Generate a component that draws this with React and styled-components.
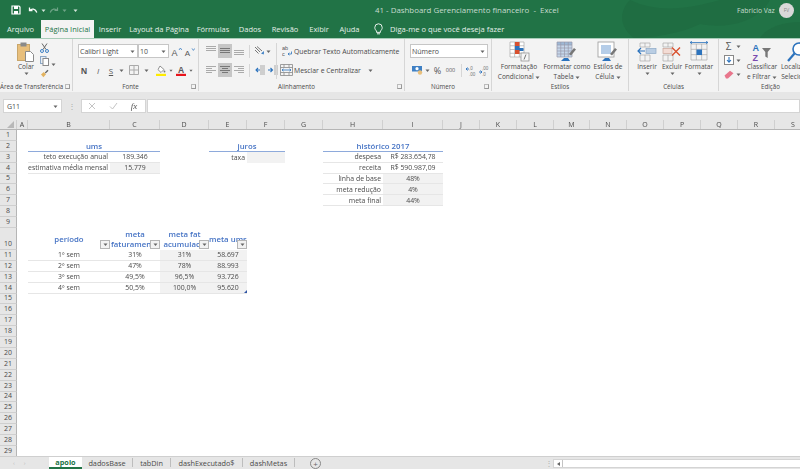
import React from "react";
import styled, { createGlobalStyle } from "styled-components";

const GlobalStyle = createGlobalStyle`
  html, body {
    margin: 0;
    padding: 0;
    background: #fff;
    overflow: hidden;
  }
  * { box-sizing: border-box; }
`;

const font = `"Open Sans", "Noto Sans", sans-serif`;
const ink = "#4a4a4a";

const Page = styled.div`
  width: 800px;
  height: 469px;
  overflow: hidden;
  display: flex;
  flex-direction: column;
  font-family: ${font};
  font-size: 7px;
  color: ${ink};
  filter: blur(0.35px);
`;

/* ---------- title + tabs ---------- */

const Header = styled.header`
  position: relative;
  height: 38px;
  flex: none;
  background: #217346;
  color: #fff;
`;

const Swirl = styled.svg`
  position: absolute;
  left: 610px;
  top: 0;
`;

const TitleBar = styled.div`
  position: relative;
  height: 20px;
  display: flex;
  align-items: center;
  padding-left: 11px;
`;

const Quick = styled.div`
  width: 364px;
  display: flex;
  align-items: center;
  gap: 3px;
`;

const Spacer = styled.span`
  width: ${(p) => p.$w}px;
  flex: none;
`;

const DocTitle = styled.div`
  width: 362px;
  color: #c7dccf;
  font-size: 7.9px;
  white-space: pre;
`;

const UserName = styled.div`
  width: 42px;
  color: #c7dccf;
  font-size: 6.8px;
  white-space: nowrap;
`;

const Avatar = styled.div`
  width: 15px;
  height: 15px;
  border-radius: 50%;
  background: #d9d9d9;
  color: #888;
  font-size: 5px;
  display: flex;
  align-items: center;
  justify-content: center;
`;

const TabRow = styled.nav`
  position: relative;
  height: 18px;
  display: flex;
  align-items: stretch;
`;

const Tab = styled.div`
  width: ${(p) => p.$w}px;
  display: flex;
  align-items: center;
  justify-content: center;
  white-space: nowrap;
  font-size: 7.5px;
  color: ${(p) => (p.$active ? "#217346" : "#e4efe9")};
  background: ${(p) => (p.$active ? "#f3f3f3" : "transparent")};
`;

const TellMe = styled.div`
  display: flex;
  align-items: center;
  gap: 7px;
  margin-left: 9px;
  font-size: 7.6px;
  color: #e4efe9;
  white-space: nowrap;
`;

/* ---------- ribbon ---------- */

const Ribbon = styled.section`
  height: 54px;
  flex: none;
  display: flex;
  overflow: hidden;
  background: #f3f3f3;
  border-top: 1px solid #a8cdb9;
`;

const Group = styled.div`
  position: relative;
  width: ${(p) => p.$w}px;
  flex: none;
  display: flex;
  flex-direction: column;
  border-right: 1px solid #d6d6d6;
  margin-bottom: 1px;
`;

const GroupBody = styled.div`
  flex: 1;
  min-height: 0;
  display: flex;
  padding-left: ${(p) => p.$pl || 0}px;
  padding-top: ${(p) => p.$pt || 0}px;
`;

const GroupLabel = styled.div`
  height: 9px;
  flex: none;
  text-align: center;
  font-size: 6.2px;
  line-height: 9px;
  white-space: nowrap;
  padding-right: ${(p) => p.$pr || 0}px;
`;

const Launcher = styled.span`
  position: absolute;
  right: 2px;
  bottom: 2px;
  width: 5px;
  height: 5px;
  border: 1px solid #999;
  border-top-color: #bbb;
  border-left-color: #bbb;
`;

const Stack = styled.div`
  display: flex;
  flex-direction: column;
  gap: 5px;
  padding-top: 5px;
  width: ${(p) => (p.$w ? `${p.$w}px` : "auto")};
`;

const ToolRow = styled.div`
  height: 14px;
  flex: none;
  display: flex;
  align-items: center;
  padding-left: ${(p) => p.$pl || 0}px;
`;

const Slot = styled.div`
  width: ${(p) => p.$w}px;
  height: 14px;
  flex: none;
  display: flex;
  align-items: center;
  justify-content: center;
  font-size: ${(p) => p.$fs || 7}px;
  font-weight: ${(p) => p.$fw || 400};
  font-style: ${(p) => (p.$italic ? "italic" : "normal")};
  font-family: ${(p) => (p.$serif ? `"Liberation Serif", serif` : "inherit")};
  background: ${(p) => (p.$on ? "#c6c6c6" : "transparent")};
  color: #555;
`;

const Combo = styled.div`
  position: relative;
  width: ${(p) => p.$w}px;
  height: 14px;
  flex: none;
  background: #fff;
  border: 1px solid #c6c6c6;
  display: flex;
  align-items: center;
  justify-content: space-between;
  padding: 0 2px 0 1px;
  font-size: 7px;
  white-space: nowrap;
`;

const Divider = styled.span`
  width: 1px;
  height: 13px;
  flex: none;
  background: #d6d6d6;
  margin: 0 ${(p) => p.$m || 0}px;
`;

const TallDivider = styled.span`
  width: 1px;
  height: 36px;
  flex: none;
  margin: 4px 3px 0 0;
  background: #d6d6d6;
`;

const WideTool = styled.div`
  display: flex;
  align-items: center;
  gap: 1px;
  white-space: nowrap;
  font-size: 6.85px;
`;

const BigButton = styled.div`
  width: ${(p) => p.$w}px;
  flex: none;
  display: flex;
  flex-direction: column;
  align-items: center;
  white-space: nowrap;
  font-size: 6.55px;
  line-height: 10px;
  padding-top: ${(p) => p.$top || 0}px;
`;

const BigIcon = styled.div`
  height: 21px;
  display: flex;
  align-items: flex-end;
  justify-content: center;
`;

const SmallCol = styled.div`
  width: ${(p) => p.$w}px;
  flex: none;
  display: flex;
  flex-direction: column;
  align-items: center;
  gap: ${(p) => p.$gap || 0}px;
  padding-top: ${(p) => p.$top || 0}px;
`;

const CopyCaret = styled.div`
  padding-top: 18px;
`;

const Caret = ({ color = "#666" }) => (
  <svg width="5" height="3" viewBox="0 0 5 3">
    <path d="M0.5 0.5h4L2.5 3z" fill={color} />
  </svg>
);

const Line = ({ d, c = "#777", w = 1 }) => <path d={d} stroke={c} strokeWidth={w} fill="none" />;

const SaveIcon = () => (
  <svg width="10" height="10" viewBox="0 0 10 10">
    <path d="M1 1h7l1 1v7H1z" fill="none" stroke="#fff" strokeWidth="1.2" />
    <path d="M3 1h4v3H3zM3 6h4v3H3z" fill="#fff" />
  </svg>
);

const UndoIcon = ({ c = "#fff" }) => (
  <svg width="10" height="9" viewBox="0 0 10 9">
    <path d="M1.5 1.5v3h3" fill="none" stroke={c} strokeWidth="1.3" />
    <path d="M1.8 4.4C3.5 2.4 7.5 2.4 8.8 6.5" fill="none" stroke={c} strokeWidth="1.3" />
  </svg>
);

const RedoIcon = () => (
  <svg width="10" height="9" viewBox="0 0 10 9">
    <path d="M8.5 1.5v3h-3" fill="none" stroke="#6fa487" strokeWidth="1.2" />
    <path d="M8.2 4.4C6.5 2.4 2.5 2.4 1.2 6.5" fill="none" stroke="#6fa487" strokeWidth="1.2" />
  </svg>
);

const BulbIcon = () => (
  <svg width="9" height="12" viewBox="0 0 9 12">
    <path d="M2.6 8C1.5 7 .8 6 .8 4.5a3.7 3.7 0 0 1 7.4 0C8.2 6 7.5 7 6.4 8v1.4H2.6z" fill="none" stroke="#fff" strokeWidth="0.9" />
    <path d="M3 10.8h3" stroke="#fff" strokeWidth="0.9" />
  </svg>
);

const PasteIcon = () => (
  <svg width="18" height="20" viewBox="0 0 18 20">
    <rect x="0.5" y="2.5" width="12" height="16" fill="#e8bf7c" stroke="#c9a66a" />
    <rect x="3.5" y="0.5" width="6" height="4" fill="#8a8a8a" />
    <path d="M8.5 9.5h5l3 3v7h-8z" fill="#fff" stroke="#8a8a8a" />
  </svg>
);

const ScissorsIcon = () => (
  <svg width="9" height="10" viewBox="0 0 9 10">
    <Line d="M2 0.5l4 6M7 0.5l-4 6" c="#666" />
    <circle cx="2" cy="8" r="1.5" fill="none" stroke="#3f80c4" />
    <circle cx="7" cy="8" r="1.5" fill="none" stroke="#3f80c4" />
  </svg>
);

const CopyIcon = () => (
  <svg width="9" height="10" viewBox="0 0 9 10">
    <rect x="0.5" y="0.5" width="5.5" height="7" fill="#e8eef5" stroke="#8ca8c6" />
    <rect x="3" y="2.5" width="5.5" height="7" fill="#fff" stroke="#8a8a8a" />
  </svg>
);

const BrushIcon = () => (
  <svg width="9" height="9" viewBox="0 0 9 9">
    <path d="M4.8 3.4L7.5.7 8.5 1.7 5.7 4.4z" fill="#666" />
    <path d="M1 5.5L3.8 3l2.2 2.3-2.6 3z" fill="#e3b35f" />
  </svg>
);

const BorderIcon = () => (
  <svg width="10" height="10" viewBox="0 0 10 10">
    <path d="M.5.5h9v9h-9zM5 .5v9M.5 5h9" fill="none" stroke="#aaa" />
  </svg>
);

const BucketIcon = () => (
  <svg width="10" height="11" viewBox="0 0 10 11">
    <path d="M4 1l4 3.5-3 3L2 4.6z" fill="#fff" stroke="#777" strokeWidth="0.8" />
    <circle cx="8.5" cy="6.5" r="0.9" fill="#777" />
    <rect x="0" y="8.8" width="10" height="2.2" fill="#ffeb00" />
  </svg>
);

const FontColorIcon = () => (
  <svg width="10" height="11" viewBox="0 0 10 11">
    <text x="5" y="7.6" textAnchor="middle" fontSize="8.5" fontWeight="700" fontFamily="Liberation Sans" fill="#555">A</text>
    <rect x="0" y="8.8" width="10" height="2.2" fill="#e8141c" />
  </svg>
);

const GrowA = ({ small }) => (
  <svg width="12" height="11" viewBox="0 0 12 11">
    <text x="4.5" y="9.5" textAnchor="middle" fontSize={small ? 8 : 9} fontFamily="Liberation Sans" fill="#555">A</text>
    <path d={small ? "M9 2.4l1.4 2 1.4-2" : "M9 4l1.4-2 1.4 2"} fill="none" stroke="#3f80c4" strokeWidth="0.8" />
  </svg>
);

const LinesIcon = ({ rows, dark }) => (
  <svg width="10" height="10" viewBox="0 0 10 10">
    {rows.map(([x, y, w]) => (
      <rect key={`${x}${y}`} x={x} y={y} width={w} height="1" fill={dark ? "#777" : "#aaa"} />
    ))}
  </svg>
);

const vTop = [[0, 0, 10], [0, 2, 10], [0, 4, 10]];
const vMid = [[0, 2, 10], [0, 4, 10], [0, 6, 10]];
const vBot = [[0, 4, 10], [0, 6, 10], [0, 8, 10]];
const hLeft = [[0, 1, 10], [0, 3, 6], [0, 5, 10], [0, 7, 6]];
const hMid = [[0, 1, 10], [2, 3, 6], [0, 5, 10], [2, 7, 6]];
const hRight = [[0, 1, 10], [4, 3, 6], [0, 5, 10], [4, 7, 6]];

const OrientIcon = () => (
  <svg width="11" height="10" viewBox="0 0 11 10">
    <Line d="M1 1l5 5M3 .5l5 4.5M1 4l3.5 3.5" c="#777" />
    <path d="M7 7.5l3-2.5-.2 3.5z" fill="#3f80c4" />
  </svg>
);

const IndentIcon = ({ flip }) => (
  <svg width="10" height="10" viewBox="0 0 10 10">
    <path d={flip ? "M6 1h4M6 3h4M6 5h4M6 7h4M6 9h4" : "M5 1h5M5 3h5M5 5h5M5 7h5M5 9h5"} stroke="#aaa" strokeWidth="1" />
    <path d={flip ? "M0 5h4M2.5 3l2 2-2 2" : "M5 5H1M3 3L1 5l2 2"} stroke="#2c73bd" strokeWidth="1.1" fill="none" />
  </svg>
);

const WrapIcon = () => (
  <svg width="11" height="12" viewBox="0 0 11 12">
    <text x="0" y="5" fontSize="5.5" fontFamily="Liberation Sans" fill="#555">ab</text>
    <text x="0" y="11" fontSize="5.5" fontFamily="Liberation Sans" fill="#555">c</text>
    <path d="M6 9h3.5V6.5M6 9l1.4-1.2M6 9l1.4 1.2" stroke="#2c73bd" strokeWidth="0.8" fill="none" />
  </svg>
);

const MergeIcon = () => (
  <svg width="13" height="12" viewBox="0 0 13 12">
    <path d="M.5.5h12v11H.5zM.5 3.5h12M.5 8.5h12M4 .5v3M9 .5v3M4 8.5v3M9 8.5v3" fill="none" stroke="#888" strokeWidth="0.8" />
    <path d="M2 6h9M3.5 4.8L2 6l1.5 1.2M9.5 4.8L11 6 9.5 7.2" fill="none" stroke="#2c73bd" strokeWidth="0.8" />
  </svg>
);

const CurrencyIcon = () => (
  <svg width="11" height="10" viewBox="0 0 11 10">
    <rect x="0" y="1" width="10" height="5.5" fill="#3f80c4" />
    <circle cx="5" cy="3.7" r="1.6" fill="#fff" />
    <circle cx="8" cy="7.5" r="2.2" fill="#e8bf7c" />
  </svg>
);

const DecimalIcon = ({ more }) => (
  <svg width="12" height="11" viewBox="0 0 12 11">
    <text x="3" y="5" fontSize="4.5" fontFamily="Liberation Sans" fill="#777">{more ? ",0" : ",00"}</text>
    <text x="3" y="10.5" fontSize="4.5" fontFamily="Liberation Sans" fill="#777">{more ? ",00" : ",0"}</text>
    <path d={more ? "M0 4h3M1.6 2.5L0 4l1.6 1.5" : "M0 7h3M1.4 5.5L3 7 1.4 8.5"} stroke="#2c73bd" strokeWidth="0.9" fill="none" />
  </svg>
);

const Grid = ({ x, y, w, h, cols, rows, c = "#aaa" }) => {
  const lines = [];
  for (let i = 0; i <= cols; i++) lines.push(`M${x + (i * w) / cols} ${y}v${h}`);
  for (let i = 0; i <= rows; i++) lines.push(`M${x} ${y + (i * h) / rows}h${w}`);
  return <path d={lines.join("")} stroke={c} strokeWidth="0.7" fill="none" />;
};

const CondFormatIcon = () => (
  <svg width="21" height="21" viewBox="0 0 21 21">
    <rect x="1" y="1" width="14" height="15" fill="#fff" />
    <Grid x={1} y={1} w={14} h={15} cols={3} rows={4} />
    <rect x="6" y="1" width="4.5" height="4" fill="#d9502e" />
    <rect x="6" y="5" width="4.5" height="4" fill="#2c73bd" />
    <rect x="10" y="7" width="4.5" height="3" fill="#2c73bd" />
    <rect x="6" y="9" width="4.5" height="4" fill="#d9502e" />
    <rect x="12" y="12" width="8" height="8" fill="#f6f6f6" stroke="#888" strokeWidth="0.7" />
    <path d="M15 18.5l2-5" stroke="#555" strokeWidth="0.8" />
  </svg>
);

const BrushMark = () => (
  <>
    <path d="M13 13l5-6 2 1.5-5 6z" fill="#777" />
    <path d="M5 20l3-3 4 0 2 3z" fill="#2c73bd" />
  </>
);

const FormatTableIcon = () => (
  <svg width="22" height="21" viewBox="0 0 22 21">
    <rect x="1" y="1" width="15" height="15" fill="#c5d6ea" />
    <rect x="1" y="1" width="15" height="3" fill="#9db8d6" />
    <Grid x={1} y={1} w={15} h={15} cols={4} rows={5} c="#99a" />
    <BrushMark />
  </svg>
);

const CellStyleIcon = () => (
  <svg width="22" height="21" viewBox="0 0 22 21">
    <rect x="1" y="1" width="16" height="15" fill="#fff" stroke="#999" strokeWidth="0.8" />
    <rect x="4" y="4" width="10" height="9" fill="#b5cde8" />
    <BrushMark />
  </svg>
);

const InsertCellIcon = () => (
  <svg width="20" height="20" viewBox="0 0 20 20">
    <Grid x={3} y={1} w={10} h={4} cols={2} rows={1} />
    <Grid x={3} y={13} w={10} h={6} cols={2} rows={1} />
    <rect x="9" y="6.5" width="10" height="5" fill="#b9cde3" stroke="#8ca8c6" strokeWidth="0.7" />
    <path d="M8 9H1M4 6L1 9l3 3" stroke="#2c73bd" strokeWidth="1.2" fill="none" />
  </svg>
);

const DeleteCellIcon = () => (
  <svg width="20" height="20" viewBox="0 0 20 20">
    <Grid x={1} y={1} w={10} h={4} cols={2} rows={1} />
    <Grid x={1} y={13} w={10} h={6} cols={2} rows={1} />
    <rect x="1" y="6.5" width="9" height="5" fill="#f3dcd5" stroke="#c9a498" strokeWidth="0.7" />
    <path d="M10 5.5l8 8M18 5.5l-8 8" stroke="#d9502e" strokeWidth="1.4" />
  </svg>
);

const FormatCellIcon = () => (
  <svg width="20" height="21" viewBox="0 0 20 21">
    <Grid x={2} y={3} w={16} h={16} cols={3} rows={3} />
    <rect x="7.5" y="8.5" width="5.5" height="5.5" fill="#2c73bd" />
    <path d="M1 1.5h18M1 1.5l2-1.2M1 1.5l2 1.2M19 1.5l-2-1.2M19 1.5l-2 1.2" stroke="#2c73bd" strokeWidth="0.8" fill="none" />
  </svg>
);

const FillDownIcon = () => (
  <svg width="10" height="10" viewBox="0 0 10 10">
    <rect x=".5" y=".5" width="9" height="9" fill="#fff" stroke="#888" />
    <path d="M5 2v5M3 5l2 2.2L7 5" stroke="#2c73bd" strokeWidth="1.1" fill="none" />
  </svg>
);

const EraserIcon = () => (
  <svg width="10" height="9" viewBox="0 0 10 9">
    <path d="M.5 5.5L6 .8l3.5 2.5L4 8.5H2z" fill="#e8768c" />
  </svg>
);

const SortIcon = () => (
  <svg width="20" height="19" viewBox="0 0 20 19">
    <text x="0.5" y="8" fontSize="9" fontWeight="700" fontFamily="Liberation Sans" fill="#2c73bd">A</text>
    <text x="0.5" y="18" fontSize="9" fontWeight="700" fontFamily="Liberation Sans" fill="#7a4bb0">Z</text>
    <path d="M10 5h9l-3.3 4v6l-2.4-1.4V9z" fill="#777" />
  </svg>
);

const FindIcon = () => (
  <svg width="20" height="21" viewBox="0 0 20 21">
    <circle cx="12" cy="8" r="6" fill="#fff" stroke="#2c73bd" strokeWidth="1.6" />
    <path d="M7.5 12.5L1 20" stroke="#2c73bd" strokeWidth="2.2" />
  </svg>
);

/* ---------- formula bar ---------- */

const FormulaBar = styled.div`
  height: 28px;
  flex: none;
  display: flex;
  gap: 1px;
  padding: 7px 0 7px 3px;
  background: #e6e6e6;
`;

const NameBox = styled.div`
  width: 59px;
  display: flex;
  align-items: center;
  justify-content: space-between;
  padding: 0 3px;
  background: #fff;
  border: 1px solid #d4d4d4;
  font-size: 7px;
`;

const Grip = styled.div`
  width: 17px;
  text-align: center;
  color: #aaa;
  font-size: 8px;
  line-height: 14px;
`;

const FxBox = styled.div`
  width: 65px;
  display: flex;
  align-items: center;
  background: #fff;
  border: 1px solid #d4d4d4;
`;

const FormulaInput = styled.div`
  flex: 1;
  background: #fff;
  border: 1px solid #d4d4d4;
`;

/* ---------- sheet ---------- */

const COLS = [
  ["A", 11], ["B", 82], ["C", 50], ["D", 49], ["E", 38], ["F", 38], ["G", 38], ["H", 60], ["I", 60],
  ["J", 37], ["K", 37], ["L", 37], ["M", 36], ["N", 37], ["O", 37], ["P", 37], ["Q", 37], ["R", 37], ["S", 37],
];

const Sheet = styled.div`
  flex: 1;
  min-height: 0;
  overflow: hidden;
`;

const Row = styled.div`
  display: flex;
  height: ${(p) => p.$h}px;
`;

const HeadRow = styled(Row)`
  flex: none;
  background: #e6e6e6;
  border-bottom: 1px solid #b5b5b5;
`;

const Corner = styled.div`
  width: 17px;
  flex: none;
  display: flex;
  align-items: flex-end;
  justify-content: flex-end;
  padding: 0 2px 1px 0;
  border-right: 1px solid #cfcfcf;
  &::after {
    content: "";
    border-style: solid;
    border-width: 0 0 7px 7px;
    border-color: transparent transparent #b8b8b8 transparent;
  }
`;

const ColHead = styled.div`
  width: ${(p) => p.$w}px;
  flex: none;
  text-align: center;
  font-size: 7px;
  line-height: 9px;
  border-right: 1px solid #cfcfcf;
`;

const RowHead = styled.div`
  width: 17px;
  flex: none;
  display: flex;
  align-items: flex-end;
  justify-content: center;
  background: #e6e6e6;
  border-right: 1px solid #b5b5b5;
  border-bottom: 1px solid #cfcfcf;
  font-size: 7px;
  line-height: 10px;
`;

const borders = { blue: "1px solid #8eaadb", soft: "1px solid #e6e6e6" };

const Cell = styled.div`
  position: relative;
  width: ${(p) => p.$w}px;
  flex: none;
  display: flex;
  align-items: center;
  justify-content: ${(p) => (p.$align === "right" ? "flex-end" : "center")};
  padding-right: ${(p) => (p.$align === "right" ? 2 : 0)}px;
  overflow: hidden;
  white-space: nowrap;
  font-size: ${(p) => (p.$title ? 7.8 : 6.9)}px;
  color: ${(p) => (p.$title ? "#4472c4" : ink)};
  font-weight: ${(p) => (p.$title ? 600 : 400)};
  background: ${(p) => (p.$gray ? "#f2f2f2" : "#fff")};
  border-bottom: ${(p) => borders[p.$line] || "none"};
`;

const HeadText = styled.div`
  text-align: center;
  line-height: 10px;
`;

const Filter = styled.span`
  position: absolute;
  right: 0;
  bottom: 1px;
  width: 10px;
  height: 9px;
  display: flex;
  align-items: center;
  justify-content: center;
  background: #f2f2f2;
  border: 1px solid #b5b5b5;
`;

const ResizeMark = styled.span`
  position: absolute;
  right: 0;
  bottom: 0;
  border-style: solid;
  border-width: 0 0 3px 3px;
  border-color: transparent transparent #2f55a4 transparent;
`;

const title = (t, span) => ({ t, span, title: true, line: "blue" });
const label = (t) => ({ t, align: "right", line: "soft" });
const value = (t, gray) => ({ t, gray, line: "soft" });
const head = (lines) => ({ lines, title: true, filter: true });

const DATA = {
  2: { B: title("ums", 2), E: title("juros", 2), H: title("histórico 2017", 2) },
  3: {
    B: label("teto execução anual"),
    C: value("189.346"),
    E: { t: "taxa", align: "right" },
    F: { t: "", gray: true },
    H: label("despesa"),
    I: value("R$ 283.654,78"),
  },
  4: {
    B: label("estimativa média mensal"),
    C: value("15.779", true),
    H: label("receita"),
    I: value("R$ 590.987,09"),
  },
  5: { H: label("linha de base"), I: value("48%", true) },
  6: { H: label("meta redução"), I: value("4%", true) },
  7: { H: label("meta final"), I: value("44%", true) },
  10: {
    B: head(["período"]),
    C: head(["meta", "faturamento"]),
    D: head(["meta fat", "acumulado"]),
    E: head(["meta ums"]),
  },
};

[
  ["1º sem", "31%", "31%", "58.697"],
  ["2º sem", "47%", "78%", "88.993"],
  ["3º sem", "49,5%", "96,5%", "93.726"],
  ["4º sem", "50,5%", "100,0%", "95.620"],
].forEach(([b, c, d, e], i) => {
  DATA[11 + i] = { B: value(b), C: value(c), D: value(d, true), E: { ...value(e, true), mark: i === 3 } };
});

const rowNumbers = Array.from({ length: 29 }, (_, i) => i + 1);

const SheetRow = ({ n }) => {
  const cells = DATA[n] || {};
  const out = [];
  let skip = 0;
  COLS.forEach(([col, w]) => {
    if (skip > 0) {
      skip -= 1;
      return;
    }
    const c = cells[col];
    if (!c) {
      out.push(<Cell key={col} $w={w} />);
      return;
    }
    let width = w;
    if (c.span) {
      const idx = COLS.findIndex(([k]) => k === col);
      width = COLS.slice(idx, idx + c.span).reduce((sum, [, cw]) => sum + cw, 0);
      skip = c.span - 1;
    }
    out.push(
      <Cell key={col} $w={width} $align={c.align} $gray={c.gray} $line={c.line} $title={c.title}>
        {c.lines ? (
          <HeadText>
            {c.lines.map((l) => (
              <div key={l}>{l}</div>
            ))}
          </HeadText>
        ) : (
          c.t
        )}
        {c.filter && (
          <Filter>
            <Caret />
          </Filter>
        )}
        {c.mark && <ResizeMark />}
      </Cell>
    );
  });
  return (
    <Row $h={n === 10 ? 22 : 10.9}>
      <RowHead>{n}</RowHead>
      {out}
    </Row>
  );
};

/* ---------- bottom tabs ---------- */

const SheetBar = styled.footer`
  height: 13px;
  flex: none;
  display: flex;
  align-items: stretch;
  background: #e6e6e6;
  border-top: 1px solid #cfcfcf;
`;

const NavArrows = styled.div`
  width: 49px;
  display: flex;
  align-items: center;
  justify-content: flex-start;
  gap: 9px;
  padding-left: 13px;
  color: #bbb;
  font-size: 6px;
`;

const SheetTab = styled.div`
  width: ${(p) => p.$w}px;
  flex: none;
  display: flex;
  align-items: center;
  justify-content: center;
  font-size: 7.3px;
  font-weight: ${(p) => (p.$active ? 700 : 400)};
  color: ${(p) => (p.$active ? "#217346" : ink)};
  background: ${(p) => (p.$active ? "#fff" : "transparent")};
  border-bottom: ${(p) => (p.$active ? "2px solid #217346" : "none")};
  border-right: ${(p) => (p.$sep ? "1px solid #bdbdbd" : "none")};
  margin: ${(p) => (p.$active ? 0 : "1px 0 2px")};
`;

const AddSheet = styled.div`
  width: 11px;
  height: 11px;
  margin: 1px 0 0 15px;
  flex: none;
  border: 1px solid #888;
  border-radius: 50%;
  display: flex;
  align-items: center;
  justify-content: center;
  font-size: 8px;
  line-height: 1;
  color: #666;
`;

const BarGrip = styled.div`
  margin-left: 224px;
  width: 8px;
  text-align: center;
  color: #b0b0b0;
  font-size: 8px;
  line-height: 11px;
`;

const ScrollTrack = styled.div`
  flex: 1;
  display: flex;
  margin: 2px 0 1px;
  background: #fff;
  border: 1px solid #d4d4d4;
  border-right: none;
`;

const ScrollButton = styled.div`
  width: 9px;
  display: flex;
  align-items: center;
  justify-content: center;
  border-right: 1px solid #c4c4c4;
  &::before {
    content: "";
    border-style: solid;
    border-width: 2.5px 3px 2.5px 0;
    border-color: transparent #666 transparent transparent;
  }
`;

const RIBBON_TABS = [
  ["Arquivo", 41, false],
  ["Página Inicial", 53, true],
  ["Inserir", 32],
  ["Layout da Página", 66],
  ["Fórmulas", 42],
  ["Dados", 32],
  ["Revisão", 38],
  ["Exibir", 30],
  ["Ajuda", 31],
];

const App = () => (
  <>
    <GlobalStyle />
    <Page>
      <Header>
        <Swirl width="190" height="38" viewBox="0 0 190 38">
          <path d="M20 0c30 14 60 8 90 0h50c-10 20-40 30-70 24-20 10-50 14-66 14C10 28 8 12 20 0z" fill="#1f6d42" />
          <path d="M150 38c6-10 22-16 40-16v16z" fill="#1f6d42" />
        </Swirl>
        <TitleBar>
          <Quick>
            <SaveIcon />
            <Spacer $w={1} />
            <UndoIcon />
            <Caret color="#d5e6dc" />
            <RedoIcon />
            <Caret color="#6fa487" />
            <Spacer $w={0} />
            <Caret color="#d5e6dc" />
          </Quick>
          <DocTitle>41 - Dashboard Gerenciamento financeiro  -  Excel</DocTitle>
          <UserName>Fabricio Vaz</UserName>
          <Avatar>FV</Avatar>
        </TitleBar>
        <TabRow>
          {RIBBON_TABS.map(([name, w, active]) => (
            <Tab key={name} $w={w} $active={active}>
              {name}
            </Tab>
          ))}
          <TellMe>
            <BulbIcon />
            Diga-me o que você deseja fazer
          </TellMe>
        </TabRow>
      </Header>

      <Ribbon>
        <Group $w={73}>
          <GroupBody $pl={15} $pt={2}>
            <BigButton $w={22}>
              <BigIcon>
                <PasteIcon />
              </BigIcon>
              <span>Colar</span>
              <Caret />
            </BigButton>
            <SmallCol $w={14} $gap={3} $top={2}>
              <ScissorsIcon />
              <CopyIcon />
              <BrushIcon />
            </SmallCol>
            <CopyCaret>
              <Caret />
            </CopyCaret>
          </GroupBody>
          <GroupLabel $pr={10}>Área de Transferência</GroupLabel>
          <Launcher />
        </Group>

        <Group $w={126}>
          <GroupBody>
            <Stack>
              <ToolRow $pl={5}>
                <Combo $w={60}>
                  Calibri Light
                  <Caret />
                </Combo>
                <Combo $w={31}>
                  10
                  <Caret />
                </Combo>
                <Slot $w={14}>
                  <GrowA />
                </Slot>
                <Slot $w={12}>
                  <GrowA small />
                </Slot>
              </ToolRow>
              <ToolRow $pl={4}>
                <Slot $w={14} $fw={700} $fs={8}>N</Slot>
                <Slot $w={14} $italic $fs={8}>I</Slot>
                <Slot $w={12} $fs={8}>
                  <u>S</u>
                </Slot>
                <Slot $w={8}>
                  <Caret />
                </Slot>
                <Slot $w={18}>
                  <BorderIcon />
                </Slot>
                <Slot $w={6}>
                  <Caret />
                </Slot>
                <Slot $w={4} />
                <Slot $w={16}>
                  <BucketIcon />
                </Slot>
                <Slot $w={4}>
                  <Caret />
                </Slot>
                <Slot $w={16}>
                  <FontColorIcon />
                </Slot>
                <Slot $w={4}>
                  <Caret />
                </Slot>
              </ToolRow>
            </Stack>
          </GroupBody>
          <GroupLabel $pr={10}>Fonte</GroupLabel>
          <Launcher />
        </Group>

        <Group $w={206}>
          <GroupBody>
            <Stack $w={77}>
              <ToolRow $pl={5}>
                <Slot $w={14}>
                  <LinesIcon rows={vTop} />
                </Slot>
                <Slot $w={14} $on>
                  <LinesIcon rows={vMid} dark />
                </Slot>
                <Slot $w={14}>
                  <LinesIcon rows={vBot} />
                </Slot>
                <Divider $m={3} />
                <Slot $w={12}>
                  <OrientIcon />
                </Slot>
                <Slot $w={6}>
                  <Caret />
                </Slot>
              </ToolRow>
              <ToolRow $pl={5}>
                <Slot $w={14}>
                  <LinesIcon rows={hLeft} />
                </Slot>
                <Slot $w={14} $on>
                  <LinesIcon rows={hMid} dark />
                </Slot>
                <Slot $w={14}>
                  <LinesIcon rows={hRight} />
                </Slot>
                <Divider $m={3} />
                <Slot $w={13}>
                  <IndentIcon />
                </Slot>
                <Slot $w={13}>
                  <IndentIcon flip />
                </Slot>
              </ToolRow>
            </Stack>
            <TallDivider />
            <Stack>
              <ToolRow $pl={2}>
                <WideTool>
                  <WrapIcon />
                  Quebrar Texto Automaticamente
                </WideTool>
              </ToolRow>
              <ToolRow>
                <WideTool>
                  <MergeIcon />
                  Mesclar e Centralizar
                  <Spacer $w={5} />
                  <Caret />
                </WideTool>
              </ToolRow>
            </Stack>
          </GroupBody>
          <GroupLabel $pr={10}>Alinhamento</GroupLabel>
          <Launcher />
        </Group>

        <Group $w={87}>
          <GroupBody>
            <Stack>
              <ToolRow $pl={5}>
                <Combo $w={78}>
                  Número
                  <Caret />
                </Combo>
              </ToolRow>
              <ToolRow $pl={6}>
                <Slot $w={12}>
                  <CurrencyIcon />
                </Slot>
                <Slot $w={9}>
                  <Caret />
                </Slot>
                <Slot $w={11} $fs={9}>%</Slot>
                <Slot $w={15} $fs={5.5}>000</Slot>
                <Divider $m={3} />
                <Slot $w={13}>
                  <DecimalIcon more />
                </Slot>
                <Slot $w={13}>
                  <DecimalIcon />
                </Slot>
              </ToolRow>
            </Stack>
          </GroupBody>
          <GroupLabel $pr={10}>Número</GroupLabel>
          <Launcher />
        </Group>

        <Group $w={137}>
          <GroupBody $pl={3} $pt={2}>
            <BigButton $w={48}>
              <BigIcon>
                <CondFormatIcon />
              </BigIcon>
              <span>Formatação</span>
              <span>
                Condicional <Caret />
              </span>
            </BigButton>
            <BigButton $w={48}>
              <BigIcon>
                <FormatTableIcon />
              </BigIcon>
              <span>Formatar como</span>
              <span>
                Tabela <Caret />
              </span>
            </BigButton>
            <BigButton $w={34}>
              <BigIcon>
                <CellStyleIcon />
              </BigIcon>
              <span>Estilos de</span>
              <span>
                Célula <Caret />
              </span>
            </BigButton>
          </GroupBody>
          <GroupLabel>Estilos</GroupLabel>
        </Group>

        <Group $w={90}>
          <GroupBody $pl={4} $pt={2}>
            <BigButton $w={28}>
              <BigIcon>
                <InsertCellIcon />
              </BigIcon>
              <span>Inserir</span>
              <Caret />
            </BigButton>
            <BigButton $w={22}>
              <BigIcon>
                <DeleteCellIcon />
              </BigIcon>
              <span>Excluir</span>
              <Caret />
            </BigButton>
            <BigButton $w={32}>
              <BigIcon>
                <FormatCellIcon />
              </BigIcon>
              <span>Formatar</span>
              <Caret />
            </BigButton>
          </GroupBody>
          <GroupLabel>Células</GroupLabel>
        </Group>

        <Group $w={104}>
          <GroupBody>
            <SmallCol $w={24}>
              <ToolRow>
                <Slot $w={14} $fs={10}>Σ</Slot>
                <Caret />
              </ToolRow>
              <ToolRow>
                <Slot $w={14}>
                  <FillDownIcon />
                </Slot>
                <Caret />
              </ToolRow>
              <ToolRow>
                <Slot $w={14}>
                  <EraserIcon />
                </Slot>
                <Caret />
              </ToolRow>
            </SmallCol>
            <BigButton $w={38} $top={2}>
              <BigIcon>
                <SortIcon />
              </BigIcon>
              <span>Classificar</span>
              <span>
                e Filtrar <Caret />
              </span>
            </BigButton>
            <BigButton $w={32} $top={2}>
              <BigIcon>
                <FindIcon />
              </BigIcon>
              <span>Localizar e</span>
              <span>Selecionar</span>
            </BigButton>
          </GroupBody>
          <GroupLabel>Edição</GroupLabel>
        </Group>
      </Ribbon>

      <FormulaBar>
        <NameBox>
          G11
          <Caret />
        </NameBox>
        <Grip>⋮</Grip>
        <FxBox>
          <Slot $w={20}>
            <svg width="8" height="8" viewBox="0 0 8 8">
              <path d="M1 1l6 6M7 1L1 7" stroke="#c4c4c4" strokeWidth="1" />
            </svg>
          </Slot>
          <Slot $w={22}>
            <svg width="9" height="8" viewBox="0 0 9 8">
              <path d="M1 4.5L3.5 7 8 1" stroke="#c4c4c4" strokeWidth="1" fill="none" />
            </svg>
          </Slot>
          <Slot $w={20} $italic $serif $fs={9}>fx</Slot>
        </FxBox>
        <FormulaInput />
      </FormulaBar>

      <HeadRow $h={10}>
        <Corner />
        {COLS.map(([col, w]) => (
          <ColHead key={col} $w={w}>
            {col}
          </ColHead>
        ))}
      </HeadRow>

      <Sheet>
        {rowNumbers.map((n) => (
          <SheetRow key={n} n={n} />
        ))}
      </Sheet>

      <SheetBar>
        <NavArrows>
          <span>‹</span>
          <span>›</span>
        </NavArrows>
        <SheetTab $w={33} $active>apoio</SheetTab>
        <SheetTab $w={51} $sep>dadosBase</SheetTab>
        <SheetTab $w={38} $sep>tabDin</SheetTab>
        <SheetTab $w={72} $sep>dashExecutado$</SheetTab>
        <SheetTab $w={52} $sep>dashMetas</SheetTab>
        <AddSheet>+</AddSheet>
        <BarGrip>⋮</BarGrip>
        <ScrollTrack>
          <ScrollButton />
        </ScrollTrack>
      </SheetBar>
    </Page>
  </>
);

export default App;
